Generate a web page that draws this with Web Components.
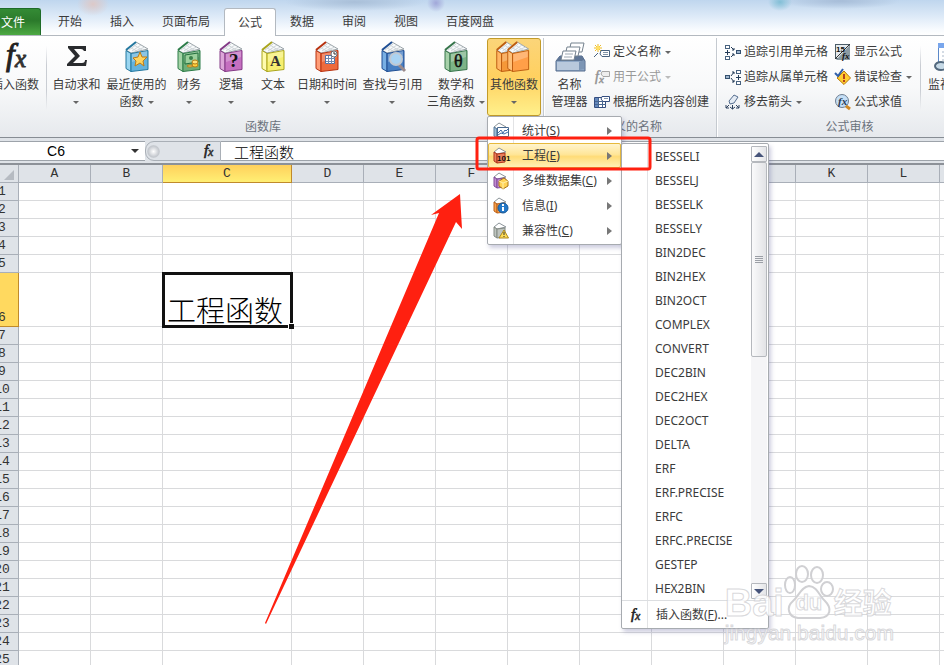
<!DOCTYPE html>
<html lang="zh-CN">
<head>
<meta charset="utf-8">
<title>工程函数</title>
<style>
  html, body {
    margin: 0;
    height: 100%;
    overflow: hidden;
  }

  body {
    font: 12px/17px "Noto Sans", "Noto Sans CJK SC", sans-serif;
    color: #3b3b3b;
    background: #fff;
  }
</style>
</head>
<body>
<excel-app></excel-app>

<script>
// shared by every element: attaches an open root filled from a template
class BaseElement extends HTMLElement {
  constructor() {
    super();
    const template = document.createElement("template");
    template.innerHTML = this.constructor.markup;
    this.attachShadow({ mode: "open" }).appendChild(template.content.cloneNode(true));
  }
}

// ---------- icons ----------

const book = (main, spine, edge, extra = "") => `
  <path d="M5 10 15 2 27 9 10 13z" fill="#f8fafb" stroke="#9aa3a8"/>
  <path d="M8 10 16 4M11 11 20 5M14 11 24 7M10 8 16 11M13 5 21 10" stroke="#d0d6d9" fill="none"/>
  <path d="M5 10.500 10 13.500 10 31.500 5 28.500z" fill="${spine}" stroke="${edge}"/>
  <path d="M10 13.500 27 10.500 27 29.500 10 31.500z" fill="${main}" stroke="${edge}"/>
  <path d="M5 10 15 2" stroke="${edge}" stroke-width="2" fill="none"/>
  <path d="M11 14 26 11 26 17 11 22z" fill="#fff" opacity=".25"/>
  ${extra}`;

const smallBook = (main, edge, extra) => `
  <path d="M1 4 6 0 13 4 4 6z" fill="#fff" stroke="#8b9499"/>
  <path d="M1 4 4 6V15L1 13z" fill="${main}" stroke="${edge}"/>
  <path d="M4 6 12 5V14L4 15z" fill="${main}" stroke="${edge}"/>
  ${extra}`;

const serif = `font-family="Liberation Serif"`;
const cell = (x, y) => `<rect x="${x}.5" y="${y}.5" width="4" height="3" fill="#fff" stroke="#48627f"/>`;

const icons = {
  fx: [32, `<text x="7" y="25" font-size="31" font-style="italic" ${serif} fill="#222" stroke="#222">f</text><text x="16" y="27" font-size="25" font-style="italic" ${serif} fill="#333" stroke="#333">x</text>`],
  sum: [32, `<path d="M7 6H25V11H23Q22 9 20 9H13L19 16 12 23H21Q24 23 24 20H26L25 26H6V24L14 16 7 8z" fill="#292b2e"/>`],
  recent: [32, book("#64b2dc", "#99d5f0", "#25789f", `<path d="M19 12 21 17 26 17 22 21 23 26 19 23 14 26 15 21 12 18 17 17z" fill="#ffd45f" stroke="#c07b13"/>`)],
  money: [32, book("#6eae78", "#a4d3a6", "#2d7d49", `<path d="M12 15 25 13V22L12 24z" fill="#9bd09c" stroke="#24703e"/><circle cx="18" cy="18" r="2" fill="#397f48"/><ellipse cx="22" cy="25" rx="3" ry="2" fill="#ffd23f" stroke="#b37a12"/><ellipse cx="22" cy="22" rx="3" ry="2" fill="#ffe27a" stroke="#b37a12"/><ellipse cx="17" cy="26" rx="3" ry="1" fill="#ffe27a" stroke="#b37a12"/>`)],
  logic: [32, book("#c56fc0", "#dca6d8", "#843b87", `<text x="14" y="27" font-size="19" font-weight="bold" ${serif} fill="#111">?</text>`)],
  text: [32, book("#f6ef70", "#fffbae", "#aaa51d", `<text x="13" y="26" font-size="15" font-weight="bold" ${serif} fill="#333">A</text>`)],
  date: [32, book("#ee6a3c", "#ff9d77", "#b83210", `<path d="M14.500 15.500h9v8h-9z" fill="#fff" stroke="#5470a5"/><path d="M15 18.500h9M15 21.500h9M17.500 16v8M20.500 16v8" stroke="#7187ad"/><circle cx="23" cy="14" r="3" fill="#fff" stroke="#66737c"/><path d="M23 12V14H25" stroke="#333" fill="none"/>`)],
  lookup: [32, book("#477fc3", "#78afe4", "#204f94", `<path d="M22 25 28 31" stroke="#9a8a8c" stroke-width="3"/><circle cx="19" cy="19" r="6" fill="#a9d3f3" stroke="#c0c9d3" stroke-width="2"/>`)],
  math: [32, book("#7cb387", "#a6d0a9", "#36754b", `<text x="14" y="27" font-size="18" ${serif} fill="#111" stroke="#111" stroke-width=".5">θ</text>`)],
  more: [32, `<g transform="translate(-6) scale(.95 1)">${book("#f59838", "#ffb664", "#bd5d10")}</g><g transform="translate(5) scale(.95 1)">${book("#ff9f48", "#ffc078", "#bd5d10")}</g>`],
  names: [32, `<path d="M6 16h22l3 5v10H2V21z" fill="#8fa8c6" stroke="#526a8c"/><path d="M2 21h29l-3-5H6z" fill="#5f7696"/><path d="M3 22h22v8H3z" fill="#b9c9dc"/><path d="M25 22 30 20V29L25 30z" fill="#7d96b5"/>
    <g fill="#fff" stroke="#75828e"><path d="M17 3h13l-2 9H15z"/><path d="M13 7h13l-2 9H11z"/><path d="M9 11h13l-2 9H7z"/></g><path d="M11 14h8M10 17h8" stroke="#9da8b2"/>`],
  watch: [32, `<rect x="2.500" y="3.500" width="22" height="24" fill="#fff" stroke="#5b88c8"/><path d="M2 3h23v5H2z" fill="#79a6ec"/><path d="M6 12h15M6 16h15M6 20h15" stroke="#a8b7c9"/><ellipse cx="5" cy="26" rx="6" ry="4" fill="#c6d9e6" stroke="#52687d" stroke-width="2"/>`],
  define: [16, `<path d="M4 0v8M0 4h8M1 1l6 6M7 1 1 7" stroke="#eebd29" stroke-width="1"/><circle cx="4" cy="4" r="2" fill="#ffe064"/><path d="M7 6.500h8.500v6H8L6 10z" fill="#fff" stroke="#48627f"/><path d="M9 8.500h5M9 10.500h5" stroke="#8294a7"/><path d="M0 13 4 9" stroke="#48627f"/>`],
  use: [16, `<text x="1" y="12" font-size="14" font-style="italic" ${serif} fill="#888" stroke="#999" stroke-width=".5">f</text><text x="5" y="14" font-size="11" font-style="italic" ${serif} fill="#888" stroke="#999" stroke-width=".5">x</text><path d="M8 2.500h7.500v5H9L7 5z" fill="#eee" stroke="#a6a6a6"/>`],
  create: [16, `<path d="M.5 3.500h11v10H.5z" fill="#fff" stroke="#344e80"/><path d="M1 4h4v9H1z" fill="#6488bd"/><path d="M1 7.500h11M1 10.500h11M4.500 4v9M8.500 4v9" stroke="#47658f"/><path d="M8 2.500h7.500v5H9L7 5z" fill="#fff" stroke="#344e80"/><path d="M10 4.500h4" stroke="#8496ac"/>`],
  precedents: [16, `${cell(0, 1)}${cell(0, 12)}<rect x="11.500" y="6.500" width="4" height="3" fill="#9fb5cd" stroke="#35516f"/><path d="M2.500 6v5M0 8.500h5M6 3l3 3M6 13l3-3M9 4v2H7M9 12v-2H7" stroke="#243c58" fill="none"/>`],
  dependents: [16, `${cell(11, 1)}${cell(11, 12)}<rect x=".5" y="6.500" width="4" height="3" fill="#9fb5cd" stroke="#35516f"/><path d="M13.500 6v5M11 8.500h5M6 7l3-4M6 9l3 4M7 3h2v2M7 13h2v-2" stroke="#243c58" fill="none"/>`],
  remove: [16, `<path d="M4 7 9 1 13 3 9 9 5 10z" fill="#e4ebf4" stroke="#556e8f"/><path d="M7.500 11v4M5 13l2.500 2 2.500-2M4 11 1 14M1 11v3h3M11 11l3 3M14 11v3h-3" stroke="#2c415e" fill="none"/>`],
  show: [16, `<rect x=".5" y=".5" width="14" height="14" fill="#e6ebee" stroke="#4c5d68"/><path d="M15 1v15H1z" fill="#8b9aa3"/><path d="M0 15 15 0" stroke="#333"/><text x="1" y="8" font-size="8" font-family="Liberation Sans" font-weight="bold" fill="#111">15</text><text x="7" y="15" font-size="9" font-style="italic" font-weight="bold" ${serif} fill="#111">fx</text>`],
  check: [16, `<path d="M9 2 15.500 9 9 15.500 2 9z" fill="#ffcd30" stroke="#b8790d"/><path d="M9 5v5M9 11v2" stroke="#b3421d" stroke-width="2"/><path d="M0 4 3 7 8 0" stroke="#315fa8" stroke-width="2" fill="none"/>`],
  evaluate: [16, `<circle cx="7" cy="7" r="6.500" fill="#c5dff6" stroke="#6e7e91"/><path d="M11 12 15 15" stroke="#d18a24" stroke-width="3"/><text x="3" y="11" font-size="11" font-style="italic" font-weight="bold" ${serif} fill="#253a55">fx</text>`],
  stat: [16, smallBook("#9dbdd7", "#5d7c9c", `<path d="M4.500 4.500h11v9h-11z" fill="#fff" stroke="#496a91"/><path d="M5 10 8 7l2 3 2-3 1 1 2-2M5 12l3-2 3 1 4-2" stroke="#3c6ba8" fill="none"/>`)],
  engineering: [16, smallBook("#e9805e", "#ae351b", `<text x="4" y="13" font-size="8" font-family="Liberation Sans" font-weight="bold" fill="#111">101</text>`)],
  cube: [16, smallBook("#c18bd0", "#814b99", `<path d="M6 8 11 5 15 8V13L10 16 6 13z" fill="#ffd255" stroke="#a87419"/><path d="M6 8l4 2 5-2M10 10v6" stroke="#fff0aa" fill="none"/>`)],
  info: [16, smallBook("#f7a04b", "#bd621a", `<circle cx="10" cy="10" r="5" fill="#2378c8" stroke="#17599b"/><path d="M10 6v2M10 9v4" stroke="#fff" stroke-width="2"/>`)],
  compat: [16, smallBook("#bec4bf", "#838a84", `<path d="M11 7 15.500 15H6z" fill="#ffdc55" stroke="#ad891e"/><path d="M11 9v3M11 13v1" stroke="#333"/>`)],
  smallfx: [16, `<text x="4" y="12" font-size="15" font-style="italic" ${serif} fill="#222" stroke="#222" stroke-width=".6">f</text><text x="8" y="13" font-size="12" font-style="italic" ${serif} fill="#333" stroke="#333" stroke-width=".6">x</text>`]
};

class AppIcon extends BaseElement {
  static markup = `
    <style>
      :host { display: inline-block; flex: none; }
      svg { display: block; overflow: visible; }
    </style>
    <svg aria-hidden="true"></svg>`;

  static get observedAttributes() {
    return ["name"];
  }

  attributeChangedCallback() {
    const [size, body] = icons[this.getAttribute("name")];
    const svg = this.shadowRoot.querySelector("svg");
    svg.setAttribute("width", size);
    svg.setAttribute("height", size);
    svg.innerHTML = body;
  }
}

class DropCaret extends BaseElement {
  static markup = `
    <style>
      :host {
        display: inline-block;
        vertical-align: middle;
        margin: 0 0 0 4px;
        border: 3px solid transparent;
        border-top-color: #666;
        border-bottom: 0;
      }
      :host([alone]) { margin: 0; }
      :host([off]) { border-top-color: #bbb; }
    </style>`;
}

// ---------- ribbon ----------

class TabBar extends BaseElement {
  static markup = `
    <style>
      :host {
        display: block;
        padding-top: 8px;
        border-bottom: 1px solid #b3b9c0;
        background:
          radial-gradient(ellipse 16px 12px at 108px 4px, #ddc9c8, transparent),
          radial-gradient(ellipse 70px 9px at 370px 2px, #a9bfd8, transparent),
          radial-gradient(ellipse 9px 9px at 451px 3px, #a1a7d9, transparent),
          radial-gradient(ellipse 12px 9px at 795px 2px, #82bfd6, transparent),
          radial-gradient(ellipse 60px 8px at 855px 1px, #a7bdd8, transparent),
          linear-gradient(#bfd6ee, #dce9f7 45%, #f8fbfe 85%, #fff);
      }
      nav { display: flex; height: 27px; }
      button {
        font: inherit;
        color: #3b3b3b;
        padding: 0 14px;
        border: 0;
        background: none;
        white-space: nowrap;
      }
      .file {
        width: 56px;
        margin-right: 3px;
        color: #fff;
        border: 1px solid #1e6b28;
        border-bottom: 0;
        border-radius: 0 3px 0 0;
        background: linear-gradient(#348b35, #2b7a2b 45%, #4da943);
      }
      .active {
        height: 28px;
        border: 1px solid #b3b9c0;
        border-bottom: 0;
        padding: 0 13px;
        border-radius: 3px 3px 0 0;
        background: #fff;
      }
    </style>
    <nav>
      <button class="file">文件</button>
      <button>开始</button>
      <button>插入</button>
      <button>页面布局</button>
      <button class="active">公式</button>
      <button>数据</button>
      <button>审阅</button>
      <button>视图</button>
      <button>百度网盘</button>
    </nav>`;
}

class RibbonGroup extends BaseElement {
  static markup = `
    <style>
      :host {
        display: flex;
        flex-direction: column;
        flex: none;
        border-right: 1px solid #c5cad0;
        box-shadow: 1px 0 #fff;
      }
      .items { display: flex; height: 80px; }
      .title { text-align: center; color: #6b727c; }
    </style>
    <div class="items"><slot></slot></div>
    <div class="title"><slot name="title"></slot></div>`;
}

class GroupRule extends BaseElement {
  static markup = `
    <style>
      :host {
        display: block;
        width: 1px;
        margin: 8px 1px;
        background: linear-gradient(transparent, #c9cdd3 30%, #c9cdd3 70%, transparent);
      }
    </style>`;
}

class RibbonButton extends BaseElement {
  static markup = `
    <style>
      :host { display: block; position: relative; flex: none; }
      button {
        display: flex;
        flex-direction: column;
        align-items: center;
        gap: 4px;
        box-sizing: border-box;
        width: 100%;
        height: 78px;
        padding: 1px 0 0;
        border: 1px solid transparent;
        border-radius: 3px;
        background: none;
        font: inherit;
        color: inherit;
        white-space: nowrap;
      }
      :host([open]) button {
        border-color: #c29b29;
        background: linear-gradient(#fbd579, #ffd060 50%, #fff08b);
      }
    </style>
    <button><app-icon></app-icon><span><slot></slot></span></button>
    <slot name="menu"></slot>`;

  connectedCallback() {
    this.shadowRoot.querySelector("app-icon").setAttribute("name", this.getAttribute("icon"));
    this.style.width = this.getAttribute("width") + "px";
  }
}

class SmallButton extends BaseElement {
  static markup = `
    <style>
      :host { display: block; }
      button {
        display: flex;
        align-items: center;
        gap: 3px;
        height: 25px;
        padding: 0;
        border: 0;
        background: none;
        font: inherit;
        color: inherit;
        white-space: nowrap;
      }
      :host([disabled]) button { color: #999; }
    </style>
    <button><app-icon></app-icon><span><slot></slot></span></button>`;

  connectedCallback() {
    this.shadowRoot.querySelector("app-icon").setAttribute("name", this.getAttribute("icon"));
    this.shadowRoot.querySelector("button").disabled = this.hasAttribute("disabled");
  }
}

class ExcelRibbon extends BaseElement {
  static markup = `
    <style>
      :host {
        display: flex;
        height: 99px;
        padding-top: 2px;
        border-bottom: 1px solid #878d94;
        background: linear-gradient(#fff, #f8f9fa 50%, #e6e9ed);
      }
      .library { padding-right: 2px; }
      .defined { padding-left: 4px; }
      .stack { display: flex; flex-direction: column; padding-top: 1px; }
      .names { width: 122px; margin-left: 3px; }
      .trace { width: 110px; margin-left: 8px; }
      .audit { width: 77px; margin-right: 7px; }
    </style>
    <ribbon-group class="library">
      <ribbon-button icon="fx" width="60">插入函数</ribbon-button>
      <group-rule></group-rule>
      <ribbon-button icon="sum" width="57">自动求和<br><drop-caret alone></drop-caret></ribbon-button>
      <ribbon-button icon="recent" width="63">最近使用的<br>函数<drop-caret></drop-caret></ribbon-button>
      <ribbon-button icon="money" width="42">财务<br><drop-caret alone></drop-caret></ribbon-button>
      <ribbon-button icon="logic" width="42">逻辑<br><drop-caret alone></drop-caret></ribbon-button>
      <ribbon-button icon="text" width="42">文本<br><drop-caret alone></drop-caret></ribbon-button>
      <ribbon-button icon="date" width="66">日期和时间<br><drop-caret alone></drop-caret></ribbon-button>
      <ribbon-button icon="lookup" width="65">查找与引用<br><drop-caret alone></drop-caret></ribbon-button>
      <ribbon-button icon="math" width="62">数学和<br>三角函数<drop-caret></drop-caret></ribbon-button>
      <ribbon-button icon="more" width="54" open>其他函数<br><drop-caret alone></drop-caret>
        <function-menu slot="menu"></function-menu>
      </ribbon-button>
      <span slot="title">函数库</span>
    </ribbon-group>
    <ribbon-group class="defined">
      <ribbon-button icon="names" width="43">名称<br>管理器</ribbon-button>
      <div class="stack names">
        <small-button icon="define">定义名称<drop-caret></drop-caret></small-button>
        <small-button icon="use" disabled>用于公式<drop-caret off></drop-caret></small-button>
        <small-button icon="create">根据所选内容创建</small-button>
      </div>
      <span slot="title">定义的名称</span>
    </ribbon-group>
    <ribbon-group>
      <div class="stack trace">
        <small-button icon="precedents">追踪引用单元格</small-button>
        <small-button icon="dependents">追踪从属单元格</small-button>
        <small-button icon="remove">移去箭头<drop-caret></drop-caret></small-button>
      </div>
      <div class="stack audit">
        <small-button icon="show">显示公式</small-button>
        <small-button icon="check">错误检查<drop-caret></drop-caret></small-button>
        <small-button icon="evaluate">公式求值</small-button>
      </div>
      <group-rule></group-rule>
      <ribbon-button icon="watch" width="60">监视窗口</ribbon-button>
      <span slot="title">公式审核</span>
    </ribbon-group>`;
}

// ---------- menus ----------

class MenuItem extends BaseElement {
  static markup = `
    <style>
      :host { display: block; position: relative; }
      button {
        display: flex;
        align-items: center;
        box-sizing: border-box;
        width: 100%;
        height: 25px;
        padding: 0 8px 0 4px;
        border: 1px solid transparent;
        border-radius: 2px;
        background: none;
        font: inherit;
        color: inherit;
        white-space: nowrap;
      }
      .label { flex: 1; margin-left: 13px; text-align: left; }
      .arrow {
        border: 4px solid transparent;
        border-left: 5px solid #777;
        border-right: 0;
      }
      :host([plain]) .arrow { display: none; }
      :host([active]) button {
        border-color: #e6b93c;
        background: linear-gradient(#fff4cd, #ffe699 45%, #ffdc78 55%, #fff0b5);
      }
    </style>
    <button role="menuitem"><app-icon></app-icon><span class="label"><slot></slot></span><span class="arrow"></span></button>
    <slot name="submenu"></slot>`;

  connectedCallback() {
    this.shadowRoot.querySelector("app-icon").setAttribute("name", this.getAttribute("icon"));
  }
}

class FunctionMenu extends BaseElement {
  static markup = `
    <style>
      :host {
        display: block;
        position: absolute;
        z-index: 2;
        top: 100%;
        left: 0;
        margin-top: -2px;
        box-sizing: border-box;
        width: 135px;
        padding: 1px 0;
        border: 1px solid #a7abb0;
        border-radius: 2px;
        background: linear-gradient(90deg, #fff 25px, #e2e3e5 25px, #e2e3e5 26px, #fff 26px);
        box-shadow: 2px 3px 4px rgba(90, 90, 150, .3);
      }
    </style>
    <menu-item icon="stat">统计(<u>S</u>)</menu-item>
    <menu-item icon="engineering" active>工程(<u>E</u>)<function-list slot="submenu"></function-list></menu-item>
    <menu-item icon="cube">多维数据集(<u>C</u>)</menu-item>
    <menu-item icon="info">信息(<u>I</u>)</menu-item>
    <menu-item icon="compat">兼容性(<u>C</u>)</menu-item>`;
}

const functionNames = [
  "BESSELI", "BESSELJ", "BESSELK", "BESSELY", "BIN2DEC", "BIN2HEX", "BIN2OCT",
  "COMPLEX", "CONVERT", "DEC2BIN", "DEC2HEX", "DEC2OCT", "DELTA", "ERF",
  "ERF.PRECISE", "ERFC", "ERFC.PRECISE", "GESTEP", "HEX2BIN"
];

class FunctionList extends BaseElement {
  static markup = `
    <style>
      :host {
        display: block;
        position: absolute;
        top: 0;
        left: 100%;
        box-sizing: border-box;
        width: 148px;
        border: 1px solid #a7abb0;
        border-radius: 2px;
        background: linear-gradient(90deg, #fff 25px, #e2e3e5 25px, #e2e3e5 26px, #fff 26px);
        box-shadow: 2px 3px 4px rgba(90, 90, 150, .3);
      }
      .body { display: flex; border-bottom: 1px solid #dcdee1; }
      .names { flex: 1; }
      .names button {
        display: block;
        width: 100%;
        height: 24px;
        padding: 0 0 0 33px;
        border: 0;
        background: none;
        font: inherit;
        color: inherit;
        text-align: left;
      }
      .bar {
        display: flex;
        flex-direction: column;
        width: 16px;
        margin: 2px 1px 1px 0;
        background: #f5f5f7;
      }
      .bar button {
        display: flex;
        align-items: center;
        justify-content: center;
        box-sizing: border-box;
        width: 16px;
        height: 16px;
        padding: 0;
        border: 1px solid #b5b8bd;
        border-radius: 1px;
        background: linear-gradient(90deg, #fff, #e4e5e8);
      }
      .thumb {
        display: flex;
        align-items: center;
        justify-content: center;
        box-sizing: border-box;
        height: 195px;
        margin-bottom: auto;
        border: 1px solid #b5b8bd;
        border-radius: 2px;
        background: linear-gradient(90deg, #fafafb, #e2e3e6);
      }
      .insert { padding: 1px 0; }
    </style>
    <div class="body">
      <div class="names"></div>
      <div class="bar">
        <button aria-label="向上"><svg width="10" height="5"><path d="M0 5 5 0 10 5z" fill="#46547a"/></svg></button>
        <div class="thumb"><svg width="8" height="7"><path d="M0 .5h8M0 2.500h8M0 4.500h8M0 6.500h8" stroke="#9b9fa6"/></svg></div>
        <button aria-label="向下"><svg width="10" height="5"><path d="M0 0 5 5 10 0z" fill="#46547a"/></svg></button>
      </div>
    </div>
    <menu-item class="insert" icon="smallfx" plain>插入函数(<u>F</u>)...</menu-item>`;

  connectedCallback() {
    this.shadowRoot.querySelector(".names").innerHTML =
      functionNames.map(name => `<button role="menuitem">${name}</button>`).join("");
  }
}

// ---------- formula bar ----------

class FormulaBar extends BaseElement {
  static markup = `
    <style>
      :host {
        display: flex;
        height: 20px;
        padding: 3px 0 2px;
        border-bottom: 2px solid #8c9198;
        background: #dfe3e8;
      }
      input {
        box-sizing: border-box;
        height: 18px;
        padding: 0;
        border: 0;
        background: none;
        color: #000;
      }
      .box, .value {
        display: flex;
        align-items: center;
        box-sizing: border-box;
        border: solid #9da3aa;
        border-width: 1px 0;
        background: #fff;
      }
      .box { width: 160px; }
      .box input { width: 142px; text-align: center; font: 14px/17px "Liberation Sans", sans-serif; }
      .caret {
        margin-left: 4px;
        border: 4px solid transparent;
        border-top-color: #333;
        border-bottom: 0;
      }
      .tools {
        display: flex;
        align-items: center;
        justify-content: space-between;
        box-sizing: border-box;
        width: 76px;
        padding: 0 4px 0 1px;
        border: 1px solid #a9afb6;
        border-radius: 9px 0 0 9px;
      }
      .knob { width: 13px; height: 13px; border-radius: 50%; background: radial-gradient(#fff, #c3c7cd 60%, #e8ebee); }
      .tools button { padding: 0; border: 0; background: none; }
      app-icon { display: block; }
      .value { flex: 1; }
      .value input { flex: 1; min-width: 0; padding: 0 13px; font: 300 15px/17px "Noto Sans CJK SC", sans-serif; }
    </style>
    <div class="box"><input aria-label="名称框" value="C6"><span class="caret"></span></div>
    <div class="tools"><span class="knob"></span><button aria-label="插入函数"><app-icon name="smallfx"></app-icon></button></div>
    <div class="value"><input aria-label="编辑栏" value="工程函数"></div>`;
}

// ---------- sheet ----------

class SheetGrid extends BaseElement {
  static markup = `
    <style>
      :host { display: block; flex: 1; min-height: 0; overflow: hidden; background: #fff; }
      table {
        table-layout: fixed;
        width: 0;
        border-collapse: separate;
        border-spacing: 0;
      }
      col { width: 72px; }
      col.rows { width: 34px; }
      col.wide { width: 129px; }
      th, td {
        box-sizing: border-box;
        height: 18px;
        padding: 0;
        border: solid #d9dadc;
        border-width: 0 1px 1px 0;
      }
      th, .corner {
        font: 13px/17px "Liberation Mono", monospace;
        color: #333;
        background: #dfe3e8;
        border-color: #a9afb8;
      }
      tbody th { padding-left: 1px; }
      .tall th, .tall td { height: 54px; vertical-align: bottom; }
      thead .on {
        border-color: #c08a2c;
        background: linear-gradient(#ffd05c, #ffef74);
      }
      tbody .on { border-color: #c08a2c; background: #ffd95f; }
      .corner svg { display: block; margin: 3px 4px 0 auto; }
      .current {
        position: relative;
        padding-left: 4px;
        outline: 3px solid #111;
        outline-offset: -2px;
        white-space: nowrap;
        font: 300 29px/34px "Noto Sans CJK SC", sans-serif;
        color: #000;
      }
      .current::after {
        content: "";
        position: absolute;
        right: -3px;
        bottom: -3px;
        width: 5px;
        height: 5px;
        border: solid #fff;
        border-width: 1px 0 0 1px;
        background: #111;
      }
    </style>
    <table></table>`;

  connectedCallback() {
    const letters = [..."ABCDEFGHIJKLM"];
    const cols = letters.map(l => `<col${l === "C" ? ' class="wide"' : ""}>`).join("");
    const head = letters.map(l => `<th scope="col"${l === "C" ? ' class="on"' : ""}>${l}</th>`).join("");
    let rows = "";
    for (let n = 1; n <= 26; n++) {
      const cells = letters.map(l => n === 6 && l === "C" ? `<td class="current">工程函数</td>` : "<td></td>").join("");
      rows += `<tr${n === 6 ? ' class="tall"' : ""}><th scope="row"${n === 6 ? ' class="on"' : ""}>${n}</th>${cells}</tr>`;
    }
    this.shadowRoot.querySelector("table").innerHTML = `
      <colgroup><col class="rows">${cols}</colgroup>
      <thead><tr><td class="corner"><svg width="10" height="10"><path d="M10 0V10H0z" fill="#b6bbc2"/></svg></td>${head}</tr></thead>
      <tbody>${rows}</tbody>`;
  }
}

// ---------- marks drawn over the window ----------

class RedMarks extends BaseElement {
  static markup = `
    <style>
      :host { display: block; position: absolute; z-index: 3; inset: 0; pointer-events: none; }
      svg { display: block; }
    </style>
    <svg width="100%" height="100%">
      <path d="M460 194 462 229 456 222 266 624 265 623 439 213 431 215z" fill="#ff2010"/>
      <rect x="477" y="138" width="173" height="31" rx="2" fill="none" stroke="#ff2010" stroke-width="3"/>
    </svg>`;
}

class SiteStamp extends BaseElement {
  static markup = `
    <style>
      :host {
        display: block;
        position: absolute;
        z-index: 4;
        right: 50px;
        bottom: 20px;
        pointer-events: none;
        color: rgba(255, 255, 255, .8);
        -webkit-text-stroke: 1px rgba(200, 200, 204, .7);
        font-family: "Liberation Sans", "Noto Sans CJK SC", sans-serif;
      }
      .logo { display: flex; align-items: flex-end; }
      .bai { font: bold 38px/36px "Liberation Sans", sans-serif; }
      .paw { display: grid; align-items: end; justify-items: center; }
      .paw > * { grid-area: 1 / 1; }
      .du { font: bold 22px/36px "Liberation Sans", sans-serif; }
      .jy { font: bold 29px/40px "Noto Sans CJK SC", sans-serif; }
      .url { font-size: 21px; line-height: 24px; }
    </style>
    <div class="logo">
      <span class="bai">Bai</span>
      <span class="paw">
        <svg width="50" height="56" fill="rgba(255,255,255,.6)" stroke="#d0d0d3" stroke-width="2">
          <ellipse cx="6" cy="20" rx="5" ry="8"/><ellipse cx="18" cy="9" rx="6" ry="8"/>
          <ellipse cx="33" cy="10" rx="6" ry="8"/><ellipse cx="43" cy="24" rx="6" ry="7"/>
          <path d="M25 21C17 22 15 31 9 36 2 42 4 52 14 53H36C47 52 48 43 41 36 35 31 34 22 25 21z"/>
        </svg>
        <span class="du">du</span>
      </span>
      <span class="jy">经验</span>
    </div>
    <div class="url">jingyan.baidu.com</div>`;
}

class ExcelApp extends BaseElement {
  static markup = `
    <style>
      :host { display: block; position: relative; height: 100vh; overflow: hidden; }
      /* the window sits partly past the left edge of the screen */
      .window { display: flex; flex-direction: column; height: 100%; margin-left: -15px; }
    </style>
    <div class="window">
      <tab-bar></tab-bar>
      <excel-ribbon></excel-ribbon>
      <formula-bar></formula-bar>
      <sheet-grid></sheet-grid>
    </div>
    <red-marks></red-marks>
    <site-stamp></site-stamp>`;
}

window.customElements.define("app-icon", AppIcon);
window.customElements.define("drop-caret", DropCaret);
window.customElements.define("tab-bar", TabBar);
window.customElements.define("ribbon-group", RibbonGroup);
window.customElements.define("group-rule", GroupRule);
window.customElements.define("ribbon-button", RibbonButton);
window.customElements.define("small-button", SmallButton);
window.customElements.define("excel-ribbon", ExcelRibbon);
window.customElements.define("menu-item", MenuItem);
window.customElements.define("function-menu", FunctionMenu);
window.customElements.define("function-list", FunctionList);
window.customElements.define("formula-bar", FormulaBar);
window.customElements.define("sheet-grid", SheetGrid);
window.customElements.define("red-marks", RedMarks);
window.customElements.define("site-stamp", SiteStamp);
window.customElements.define("excel-app", ExcelApp);
</script>
</body>
</html>
